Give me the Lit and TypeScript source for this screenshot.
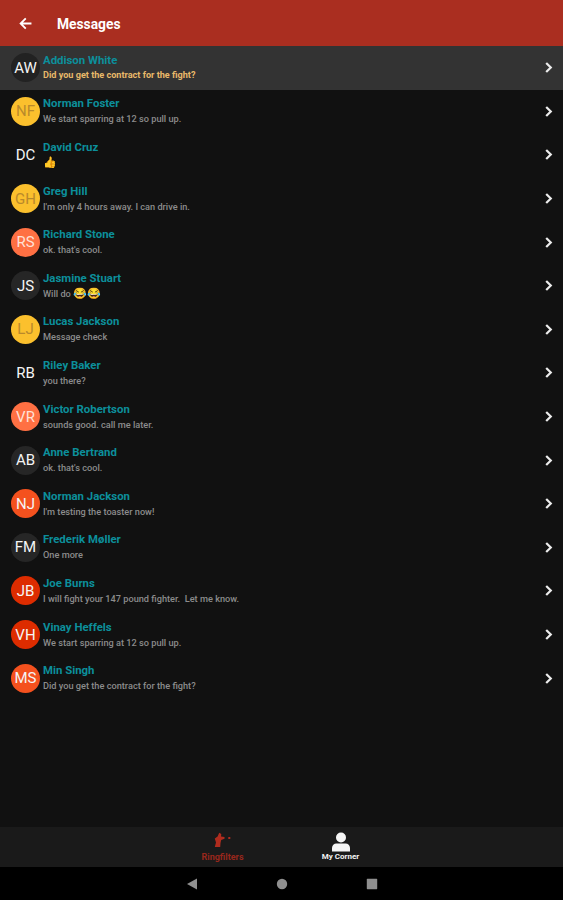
import { LitElement, html, css } from "lit";
import { customElement } from "lit/decorators.js";

type Row = { i: string; n: string; m: string; e?: string; bg: string; fg?: string; sel?: boolean };

const Y = "#fbc02d", O = "#ff7043", D = "#262626", N = "transparent", R1 = "#f4511e", R2 = "#dd2c00";
const YF = "#b9892b";

const rows: Row[] = [
  { i: "AW", n: "Addison White", m: "Did you get the contract for the fight?", bg: "#222222", sel: true },
  { i: "NF", n: "Norman Foster", m: "We start sparring at 12 so pull up.", bg: Y, fg: YF },
  { i: "DC", n: "David Cruz", m: "", e: "👍", bg: N },
  { i: "GH", n: "Greg Hill", m: "I'm only 4 hours away. I can drive in.", bg: Y, fg: YF },
  { i: "RS", n: "Richard Stone", m: "ok. that's cool.", bg: O, fg: "#ffe0d6" },
  { i: "JS", n: "Jasmine Stuart", m: "Will do ", e: "😂😂", bg: D },
  { i: "LJ", n: "Lucas Jackson", m: "Message check", bg: Y, fg: YF },
  { i: "RB", n: "Riley Baker", m: "you there?", bg: N },
  { i: "VR", n: "Victor Robertson", m: "sounds good. call me later.", bg: O, fg: "#ffe0d6" },
  { i: "AB", n: "Anne Bertrand", m: "ok. that's cool.", bg: D },
  { i: "NJ", n: "Norman Jackson", m: "I'm testing the toaster now!", bg: R1 },
  { i: "FM", n: "Frederik Møller", m: "One more", bg: D },
  { i: "JB", n: "Joe Burns", m: "I will fight your 147 pound fighter.  Let me know.", bg: R2 },
  { i: "VH", n: "Vinay Heffels", m: "We start sparring at 12 so pull up.", bg: R2 },
  { i: "MS", n: "Min Singh", m: "Did you get the contract for the fight?", bg: R1 },
];

@customElement("app-root")
export class AppRoot extends LitElement {
  static styles = css`
    :host { display: flex; flex-direction: column; width: 563px; height: 900px; background: #111111; font-family: Roboto, "Liberation Sans", sans-serif; overflow: hidden; }
    .bar { height: 46px; flex: none; background: #aa2e20; display: flex; align-items: center; color: #fff; box-sizing: border-box; padding: 0 0 0 19px; }
    .bar svg { width: 13px; height: 13px; display: block; }
    .title { margin-left: 25px; margin-top: 1px; font-size: 13.8px; font-weight: 700; }
    .list { flex: 1; min-height: 0; }
    .row { height: 43.6px; display: flex; align-items: center; box-sizing: border-box; padding: 0 9px 0 11px; }
    .row.sel { background: #333333; }
    .av { width: 29px; height: 29px; flex: none; border-radius: 50%; display: flex; align-items: center; justify-content: center; font-size: 15px; color: #f5f5f5; }
    .txt { flex: 1; min-width: 0; margin-left: 3px; display: flex; flex-direction: column; gap: 3px; margin-top: -1px; }
    .name { font-size: 11.4px; line-height: 13px; font-weight: 700; color: #0c8f9b; }
    .msg { font-size: 9.2px; line-height: 11px; font-weight: 500; color: #8c8c8c; white-space: pre; }
    .emo { font-size: 11px; line-height: 0; }
    .sel .msg { color: #e8b96a; font-weight: 700; font-size: 9.1px; }
    .chev { width: 11px; height: 11px; flex: none; }
    .tabs { height: 40px; flex: none; background: #1a1a1a; display: flex; justify-content: center; }
    .tab { width: 118px; display: flex; flex-direction: column; align-items: center; justify-content: flex-end; padding-bottom: 5px; box-sizing: border-box; font-size: 9px; line-height: 10px; font-weight: 700; color: #f2f2f2; }
    .tab.on { color: #97271c; }
    .tab.me { font-size: 8px; }
    .tab svg { width: 20px; height: 20px; display: block; }
    .nav { height: 33px; flex: none; background: #000; display: flex; align-items: center; justify-content: center; gap: 78px; }
    .nav svg { width: 12px; height: 12px; display: block; }
  `;

  render() {
    return html`
      <div class="bar">
        <svg viewBox="0 0 24 24" fill="none" stroke="#fff" stroke-width="3.4"><path d="M23 12H3M12.5 2.500 3 12l9.500 9.500"/></svg>
        <span class="title">Messages</span>
      </div>
      <div class="list">
        ${rows.map((r) => html`
          <div class="row ${r.sel ? "sel" : ""}">
            <div class="av" style="background:${r.bg};${r.fg ? `color:${r.fg}` : ""}">${r.i}</div>
            <div class="txt">
              <div class="name">${r.n}</div>
              <div class="msg">${r.m}${r.e ? html`<span class="emo">${r.e}</span>` : ""}</div>
            </div>
            <svg class="chev" viewBox="0 0 12 12" fill="none" stroke="#ececec" stroke-width="2.4"><path d="M3.500 1 8.500 6l-5 5"/></svg>
          </div>`)}
      </div>
      <div class="tabs">
        <div class="tab on">
          <svg viewBox="0 0 20 20" fill="#b02c1e"><path d="M6.200 .8 8.300 2 8 4.600 11.500 5 11.500 6.800 8.200 8 7.500 11 7.200 15H1.800L3 10.500 1.800 6.500 4.600 4.400zM15.300 5h2v2h-2z"/></svg>
          <span>Ringfilters</span>
        </div>
        <div class="tab me">
          <svg viewBox="0 0 20 20" fill="#f5f5f5"><circle cx="10" cy="5.500" r="5"/><path d="M1 19.500V16c0-2.500 2-4.400 4.400-4.400h9.200C17 11.600 19 13.500 19 16v3.500z"/></svg>
          <span>My Corner</span>
        </div>
      </div>
      <div class="nav">
        <svg viewBox="0 0 12 12" fill="#8f8f8f"><path d="M11 .5v11L1 6z"/></svg>
        <svg viewBox="0 0 12 12" fill="#8f8f8f"><circle cx="6" cy="6" r="5.200"/></svg>
        <svg viewBox="0 0 12 12" fill="#8f8f8f"><rect x=".8" y=".8" width="10.400" height="10.400" rx=".6"/></svg>
      </div>
    `;
  }
}
